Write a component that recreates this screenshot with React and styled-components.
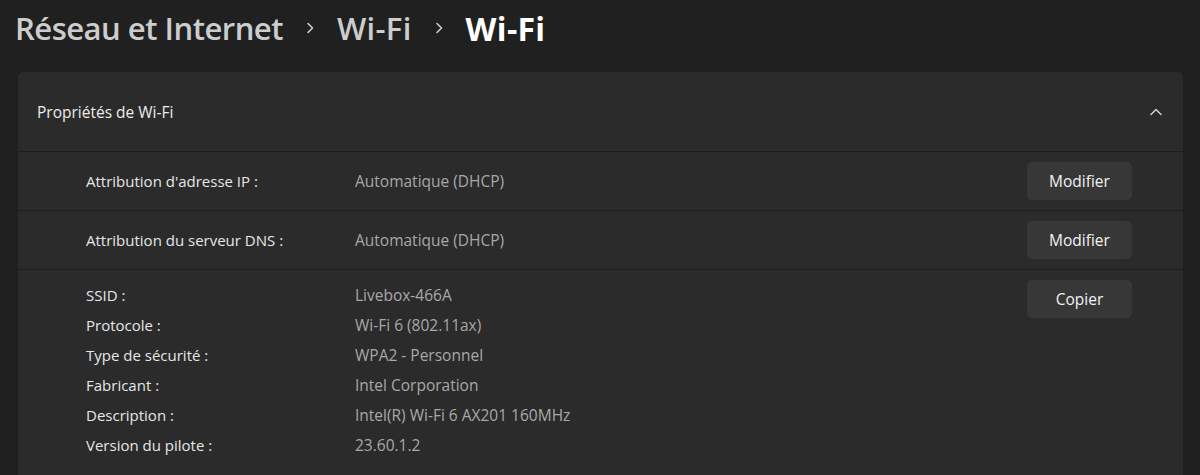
import React from 'react';
import styled, { createGlobalStyle } from 'styled-components';

const GlobalStyle = createGlobalStyle`
  html, body {
    margin: 0;
    padding: 0;
    background: #202020;
  }
  body {
    font-family: "Open Sans", "Noto Sans", sans-serif;
    color: #e4e4e4;
  }
`;

const Page = styled.div`
  width: 1200px;
  height: 475px;
  overflow: hidden;
  background: #202020;
  padding: 0 17px 0 18px;
  box-sizing: border-box;
`;

const Breadcrumb = styled.div`
  display: flex;
  align-items: center;
  height: 56px;
  margin-left: -3px;
  padding-bottom: 2px;
`;

const Crumb = styled.span`
  font-size: ${(p) => (p.current ? '32px' : '31px')};
  font-weight: ${(p) => (p.current ? 700 : 600)};
  color: ${(p) => (p.current ? '#ffffff' : '#cdcdcd')};
  letter-spacing: ${(p) => (p.tight ? '-0.5px' : '0.3px')};
`;

const Sep = styled.span`
  display: flex;
  align-items: center;
  justify-content: center;
  width: 54px;
`;

const Card = styled.div`
  margin-top: 14px;
  background: #2b2b2b;
  border-radius: 5px;
  overflow: hidden;
`;

const Header = styled.div`
  display: flex;
  align-items: center;
  justify-content: space-between;
  height: 79px;
  padding: 0 20px 0 19px;
  border-bottom: 1px solid #1e1e1e;
  font-size: 15.5px;
  color: #ececec;
`;

const Row = styled.div`
  display: grid;
  grid-template-columns: 269px 1fr 105px;
  align-items: ${(p) => (p.top ? 'start' : 'center')};
  min-height: ${(p) => (p.top ? 'auto' : '58px')};
  padding: ${(p) => (p.top ? '10px 51px 20px 68px' : '0 51px 0 68px')};
  border-bottom: ${(p) => (p.last ? 'none' : '1px solid #1e1e1e')};
  font-size: 15px;
`;

const Label = styled.div`
  color: #e6e6e6;
  line-height: ${(p) => (p.tall ? '30px' : 'normal')};
`;

const Value = styled.div`
  color: #a8a8a8;
  font-size: 15.5px;
  line-height: ${(p) => (p.tall ? '30px' : 'normal')};
`;

const Button = styled.button`
  width: 105px;
  height: 38px;
  border: none;
  border-radius: 5px;
  background: #373737;
  color: #f2f2f2;
  font-family: inherit;
  font-size: 15.5px;
`;

const Chevron = () => (
  <svg width="14" height="14" viewBox="0 0 14 14" fill="none">
    <path d="M2 9.5 L7 4.5 L12 9.5" stroke="#d8d8d8" strokeWidth="1.4" strokeLinecap="round" strokeLinejoin="round" />
  </svg>
);

const SepIcon = () => (
  <svg width="10" height="14" viewBox="0 0 10 14" fill="none">
    <path d="M3 2.5 L7.5 7 L3 11.5" stroke="#cfcfcf" strokeWidth="1.6" strokeLinecap="round" strokeLinejoin="round" />
  </svg>
);

const details = [
  ['SSID :', 'Livebox-466A'],
  ['Protocole :', 'Wi-Fi 6 (802.11ax)'],
  ['Type de sécurité :', 'WPA2 - Personnel'],
  ['Fabricant :', 'Intel Corporation'],
  ['Description :', 'Intel(R) Wi-Fi 6 AX201 160MHz'],
  ['Version du pilote :', '23.60.1.2'],
];

export default function App() {
  return (
    <>
      <GlobalStyle />
      <Page>
        <Breadcrumb>
          <Crumb tight>Réseau et Internet</Crumb>
          <Sep><SepIcon /></Sep>
          <Crumb>Wi-Fi</Crumb>
          <Sep><SepIcon /></Sep>
          <Crumb current>Wi-Fi</Crumb>
        </Breadcrumb>
        <Card>
          <Header>
            <span>Propriétés de Wi-Fi</span>
            <Chevron />
          </Header>
          <Row>
            <Label>Attribution d'adresse IP :</Label>
            <Value>Automatique (DHCP)</Value>
            <Button>Modifier</Button>
          </Row>
          <Row>
            <Label>Attribution du serveur DNS :</Label>
            <Value>Automatique (DHCP)</Value>
            <Button>Modifier</Button>
          </Row>
          <Row top last>
            <div>
              {details.map(([l]) => (
                <Label tall key={l}>{l}</Label>
              ))}
            </div>
            <div>
              {details.map(([l, v]) => (
                <Value tall key={l}>{v}</Value>
              ))}
            </div>
            <Button>Copier</Button>
          </Row>
        </Card>
      </Page>
    </>
  );
}
